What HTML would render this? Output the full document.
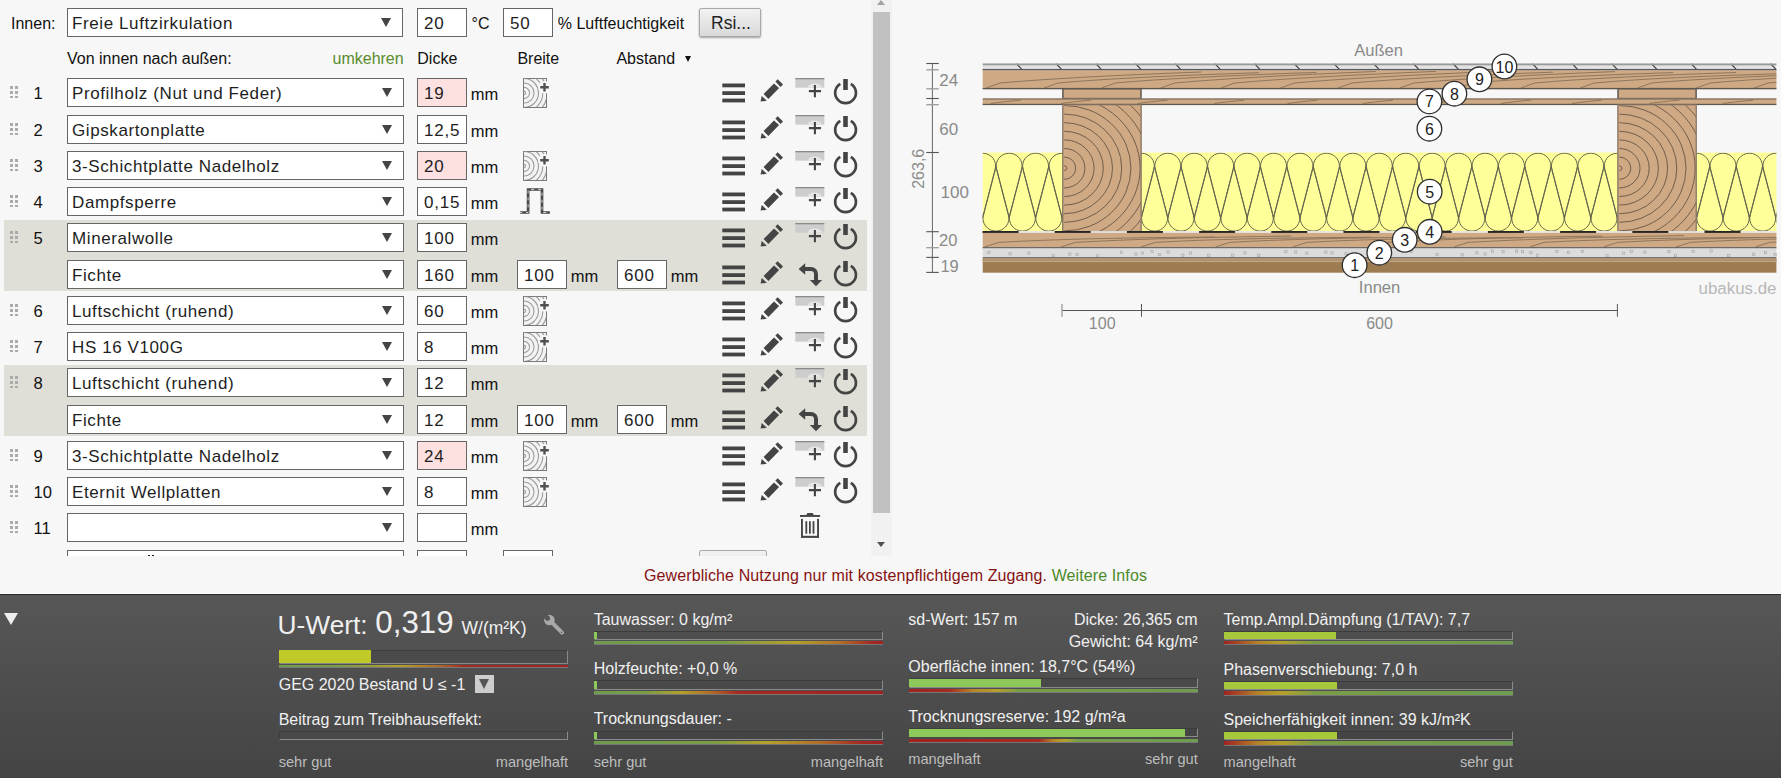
<!DOCTYPE html>
<html><head><meta charset="utf-8"><style>
*{box-sizing:border-box;margin:0;padding:0}
html,body{width:1781px;height:778px;overflow:hidden;background:#f7f7f7;font-family:"Liberation Sans",sans-serif;font-size:16px;color:#111}
.abs,.sel,.inp,.t,.mm,.num,.drag,.ic,.grey,.btn{position:absolute}
#left{position:absolute;left:0;top:0;width:871px;height:555.7px;overflow:hidden}
.grey{left:4px;width:863px;background:#dfded7}
.sel{height:29px;background:#fff;border:1px solid #666}
.sel .st{position:absolute;left:4px;font-size:17px;line-height:20px;letter-spacing:0.6px;white-space:nowrap;color:#1e1e1e}
.sel .arr{position:absolute;right:11px;top:9.3px;width:0;height:0;border-left:5.5px solid transparent;border-right:5.5px solid transparent;border-top:9.5px solid #444}
.inp{height:29px;background:#fff;border:1px solid #666}
.inp.pink{background:#fde0e0}
.inp span{position:absolute;left:6px;font-size:17px;line-height:20px;letter-spacing:0.8px;color:#1e1e1e}
.mm,.t,.num{white-space:nowrap;color:#111}
.drag{left:10px;width:8px;height:13px}
.drag i{position:absolute;width:2.5px;height:2.5px;background:#aaa}
.drag i:nth-child(1){left:0;top:0}.drag i:nth-child(2){left:5px;top:0}
.drag i:nth-child(3){left:0;top:4.8px}.drag i:nth-child(4){left:5px;top:4.8px}
.drag i:nth-child(5){left:0;top:9.6px}.drag i:nth-child(6){left:5px;top:9.6px}
.ic{overflow:visible}
.btn{left:699px;top:8.2px;width:62px;height:29.3px;border:1px solid #a8a8a8;border-radius:2px;background:linear-gradient(#f2f2f2,#d9d9d9);box-shadow:0 1px 2px rgba(0,0,0,.35)}
#panel{position:absolute;left:0;top:592.5px;width:1781px;height:186px;border-top:1.2px solid #fff}
#panel .in{position:absolute;left:0;top:0;right:0;bottom:0;border-top:1.4px solid #2a2a2a;background:linear-gradient(#575757,#444)}
.w{position:absolute;color:#f0f0f0;white-space:nowrap}
.g{position:absolute;color:#bdbdbd;white-space:nowrap}
</style></head><body>
<div id="left">
<div class="grey" style="top:220.0px;height:70.5px"></div>
<div class="grey" style="top:365.0px;height:70.5px"></div>
<div class="drag" style="top:86.4px"><i></i><i></i><i></i><i></i><i></i><i></i></div>
<div class="num" style="left:33.6px;top:83.75px;font-size:16.6px;line-height:19px">1</div>
<div class="sel" style="left:67px;top:78.0px;width:337px"><span class="st" style="top:5.11px">Profilholz (Nut und Feder)</span><span class="arr"></span></div>
<div class="inp pink" style="left:417px;top:78.0px;width:50px"><span style="top:5.11px">19</span></div>
<div class="mm" style="left:470.8px;top:84.78px;font-size:16.5px;line-height:19px">mm</div>
<svg class="ic" style="left:522.6px;top:77.6px" width="30" height="31" viewBox="0 0 30 31"><defs><clipPath id="wc0"><rect x="1" y="0.5" width="22" height="28.5"/></clipPath></defs><rect x="0.5" y="0.5" width="23" height="29" fill="#f3f3f3" stroke="#7a7a7a" stroke-width="1"/><g clip-path="url(#wc0)" fill="none" stroke="#9c9c9c" stroke-width="1.1"><circle cx="1" cy="15" r="1.6"/><circle cx="1" cy="15" r="5.6"/><circle cx="1" cy="15" r="10"/><circle cx="1" cy="15" r="14.5"/><circle cx="1" cy="15" r="18.8"/><circle cx="1" cy="15" r="23.2"/><circle cx="1" cy="15" r="27.6"/></g><circle cx="21.5" cy="9.3" r="6.3" fill="#f7f7f7"/><path d="M21.5 5 V13.6 M17.2 9.3 H25.8" stroke="#505050" stroke-width="2.4"/></svg>
<svg class="ic" style="left:722px;top:81.5px" width="24" height="21" viewBox="0 0 24 21"><rect x="0.3" y="1.5" width="22.7" height="3.8" fill="#444"/><rect x="0.3" y="9.2" width="22.7" height="3.8" fill="#444"/><rect x="0.3" y="16.6" width="22.7" height="3.8" fill="#444"/></svg>
<svg class="ic" style="left:760px;top:78.9px" width="24" height="24" viewBox="0 0 24 24"><path d="M0.6 22.6 L1.7 16.9 L6.8 21.7 Z" fill="#444"/><path d="M3.6 15.0 L14.0 4.4 L19.1 9.0 L8.4 20.1 Z" fill="#444"/><path d="M15.4 2.5 L17.7 0.3 L23.0 5.5 L20.5 8.1 Z" fill="#444"/></svg>
<svg class="ic" style="left:795px;top:78.0px" width="30" height="32" viewBox="0 0 30 32"><rect x="0.3" y="0" width="29" height="9.7" fill="#cdcdcd"/><rect x="0.3" y="0" width="29" height="1.3" fill="#8a8a8a"/><path d="M12.5 9.7 A7.5 5.5 0 0 1 27 9.7 Z" fill="#e6e6e6"/><path d="M19.9 6.9 V19.2 M13.9 13.1 H26" stroke="#444" stroke-width="2.1"/></svg>
<svg class="ic" style="left:833px;top:78.0px" width="26" height="28" viewBox="0 0 26 28"><path d="M7.3 5.8 A10.4 10.4 0 1 0 17.8 5.8" fill="none" stroke="#444" stroke-width="2.7"/><rect x="10.2" y="1" width="4.6" height="11" fill="#444"/></svg>
<div class="drag" style="top:123.4px"><i></i><i></i><i></i><i></i><i></i><i></i></div>
<div class="num" style="left:33.6px;top:120.75px;font-size:16.6px;line-height:19px">2</div>
<div class="sel" style="left:67px;top:115.0px;width:337px"><span class="st" style="top:5.11px">Gipskartonplatte</span><span class="arr"></span></div>
<div class="inp" style="left:417px;top:115.0px;width:50px"><span style="top:5.11px">12,5</span></div>
<div class="mm" style="left:470.8px;top:121.78px;font-size:16.5px;line-height:19px">mm</div>
<svg class="ic" style="left:722px;top:118.5px" width="24" height="21" viewBox="0 0 24 21"><rect x="0.3" y="1.5" width="22.7" height="3.8" fill="#444"/><rect x="0.3" y="9.2" width="22.7" height="3.8" fill="#444"/><rect x="0.3" y="16.6" width="22.7" height="3.8" fill="#444"/></svg>
<svg class="ic" style="left:760px;top:115.9px" width="24" height="24" viewBox="0 0 24 24"><path d="M0.6 22.6 L1.7 16.9 L6.8 21.7 Z" fill="#444"/><path d="M3.6 15.0 L14.0 4.4 L19.1 9.0 L8.4 20.1 Z" fill="#444"/><path d="M15.4 2.5 L17.7 0.3 L23.0 5.5 L20.5 8.1 Z" fill="#444"/></svg>
<svg class="ic" style="left:795px;top:115.0px" width="30" height="32" viewBox="0 0 30 32"><rect x="0.3" y="0" width="29" height="9.7" fill="#cdcdcd"/><rect x="0.3" y="0" width="29" height="1.3" fill="#8a8a8a"/><path d="M12.5 9.7 A7.5 5.5 0 0 1 27 9.7 Z" fill="#e6e6e6"/><path d="M19.9 6.9 V19.2 M13.9 13.1 H26" stroke="#444" stroke-width="2.1"/></svg>
<svg class="ic" style="left:833px;top:115.0px" width="26" height="28" viewBox="0 0 26 28"><path d="M7.3 5.8 A10.4 10.4 0 1 0 17.8 5.8" fill="none" stroke="#444" stroke-width="2.7"/><rect x="10.2" y="1" width="4.6" height="11" fill="#444"/></svg>
<div class="drag" style="top:159.4px"><i></i><i></i><i></i><i></i><i></i><i></i></div>
<div class="num" style="left:33.6px;top:156.75px;font-size:16.6px;line-height:19px">3</div>
<div class="sel" style="left:67px;top:151.0px;width:337px"><span class="st" style="top:5.11px">3-Schichtplatte Nadelholz</span><span class="arr"></span></div>
<div class="inp pink" style="left:417px;top:151.0px;width:50px"><span style="top:5.11px">20</span></div>
<div class="mm" style="left:470.8px;top:157.78px;font-size:16.5px;line-height:19px">mm</div>
<svg class="ic" style="left:522.6px;top:150.6px" width="30" height="31" viewBox="0 0 30 31"><defs><clipPath id="wc2"><rect x="1" y="0.5" width="22" height="28.5"/></clipPath></defs><rect x="0.5" y="0.5" width="23" height="29" fill="#f3f3f3" stroke="#7a7a7a" stroke-width="1"/><g clip-path="url(#wc2)" fill="none" stroke="#9c9c9c" stroke-width="1.1"><circle cx="1" cy="15" r="1.6"/><circle cx="1" cy="15" r="5.6"/><circle cx="1" cy="15" r="10"/><circle cx="1" cy="15" r="14.5"/><circle cx="1" cy="15" r="18.8"/><circle cx="1" cy="15" r="23.2"/><circle cx="1" cy="15" r="27.6"/></g><circle cx="21.5" cy="9.3" r="6.3" fill="#f7f7f7"/><path d="M21.5 5 V13.6 M17.2 9.3 H25.8" stroke="#505050" stroke-width="2.4"/></svg>
<svg class="ic" style="left:722px;top:154.5px" width="24" height="21" viewBox="0 0 24 21"><rect x="0.3" y="1.5" width="22.7" height="3.8" fill="#444"/><rect x="0.3" y="9.2" width="22.7" height="3.8" fill="#444"/><rect x="0.3" y="16.6" width="22.7" height="3.8" fill="#444"/></svg>
<svg class="ic" style="left:760px;top:151.9px" width="24" height="24" viewBox="0 0 24 24"><path d="M0.6 22.6 L1.7 16.9 L6.8 21.7 Z" fill="#444"/><path d="M3.6 15.0 L14.0 4.4 L19.1 9.0 L8.4 20.1 Z" fill="#444"/><path d="M15.4 2.5 L17.7 0.3 L23.0 5.5 L20.5 8.1 Z" fill="#444"/></svg>
<svg class="ic" style="left:795px;top:151.0px" width="30" height="32" viewBox="0 0 30 32"><rect x="0.3" y="0" width="29" height="9.7" fill="#cdcdcd"/><rect x="0.3" y="0" width="29" height="1.3" fill="#8a8a8a"/><path d="M12.5 9.7 A7.5 5.5 0 0 1 27 9.7 Z" fill="#e6e6e6"/><path d="M19.9 6.9 V19.2 M13.9 13.1 H26" stroke="#444" stroke-width="2.1"/></svg>
<svg class="ic" style="left:833px;top:151.0px" width="26" height="28" viewBox="0 0 26 28"><path d="M7.3 5.8 A10.4 10.4 0 1 0 17.8 5.8" fill="none" stroke="#444" stroke-width="2.7"/><rect x="10.2" y="1" width="4.6" height="11" fill="#444"/></svg>
<div class="drag" style="top:195.4px"><i></i><i></i><i></i><i></i><i></i><i></i></div>
<div class="num" style="left:33.6px;top:192.75px;font-size:16.6px;line-height:19px">4</div>
<div class="sel" style="left:67px;top:187.0px;width:337px"><span class="st" style="top:5.11px">Dampfsperre</span><span class="arr"></span></div>
<div class="inp" style="left:417px;top:187.0px;width:50px"><span style="top:5.11px">0,15</span></div>
<div class="mm" style="left:470.8px;top:193.78px;font-size:16.5px;line-height:19px">mm</div>
<svg class="ic" style="left:520px;top:187.0px" width="32" height="30" viewBox="0 0 32 30"><path d="M0.2 25.5 H8.1 V2.5 H22 V25.5 H29.9" fill="none" stroke="#484848" stroke-width="2.7"/><path d="M0.2 25.5 H8.1 V2.5 H22 V25.5 H29.9" fill="none" stroke="#e0e0e0" stroke-width="0.9" stroke-dasharray="3 4" stroke-dashoffset="1"/></svg>
<svg class="ic" style="left:722px;top:190.5px" width="24" height="21" viewBox="0 0 24 21"><rect x="0.3" y="1.5" width="22.7" height="3.8" fill="#444"/><rect x="0.3" y="9.2" width="22.7" height="3.8" fill="#444"/><rect x="0.3" y="16.6" width="22.7" height="3.8" fill="#444"/></svg>
<svg class="ic" style="left:760px;top:187.9px" width="24" height="24" viewBox="0 0 24 24"><path d="M0.6 22.6 L1.7 16.9 L6.8 21.7 Z" fill="#444"/><path d="M3.6 15.0 L14.0 4.4 L19.1 9.0 L8.4 20.1 Z" fill="#444"/><path d="M15.4 2.5 L17.7 0.3 L23.0 5.5 L20.5 8.1 Z" fill="#444"/></svg>
<svg class="ic" style="left:795px;top:187.0px" width="30" height="32" viewBox="0 0 30 32"><rect x="0.3" y="0" width="29" height="9.7" fill="#cdcdcd"/><rect x="0.3" y="0" width="29" height="1.3" fill="#8a8a8a"/><path d="M12.5 9.7 A7.5 5.5 0 0 1 27 9.7 Z" fill="#e6e6e6"/><path d="M19.9 6.9 V19.2 M13.9 13.1 H26" stroke="#444" stroke-width="2.1"/></svg>
<svg class="ic" style="left:833px;top:187.0px" width="26" height="28" viewBox="0 0 26 28"><path d="M7.3 5.8 A10.4 10.4 0 1 0 17.8 5.8" fill="none" stroke="#444" stroke-width="2.7"/><rect x="10.2" y="1" width="4.6" height="11" fill="#444"/></svg>
<div class="drag" style="top:231.4px"><i></i><i></i><i></i><i></i><i></i><i></i></div>
<div class="num" style="left:33.6px;top:228.75px;font-size:16.6px;line-height:19px">5</div>
<div class="sel" style="left:67px;top:223.0px;width:337px"><span class="st" style="top:5.11px">Mineralwolle</span><span class="arr"></span></div>
<div class="inp" style="left:417px;top:223.0px;width:50px"><span style="top:5.11px">100</span></div>
<div class="mm" style="left:470.8px;top:229.78px;font-size:16.5px;line-height:19px">mm</div>
<svg class="ic" style="left:722px;top:226.5px" width="24" height="21" viewBox="0 0 24 21"><rect x="0.3" y="1.5" width="22.7" height="3.8" fill="#444"/><rect x="0.3" y="9.2" width="22.7" height="3.8" fill="#444"/><rect x="0.3" y="16.6" width="22.7" height="3.8" fill="#444"/></svg>
<svg class="ic" style="left:760px;top:223.9px" width="24" height="24" viewBox="0 0 24 24"><path d="M0.6 22.6 L1.7 16.9 L6.8 21.7 Z" fill="#444"/><path d="M3.6 15.0 L14.0 4.4 L19.1 9.0 L8.4 20.1 Z" fill="#444"/><path d="M15.4 2.5 L17.7 0.3 L23.0 5.5 L20.5 8.1 Z" fill="#444"/></svg>
<svg class="ic" style="left:795px;top:223.0px" width="30" height="32" viewBox="0 0 30 32"><rect x="0.3" y="0" width="29" height="9.7" fill="#cdcdcd"/><rect x="0.3" y="0" width="29" height="1.3" fill="#8a8a8a"/><path d="M12.5 9.7 A7.5 5.5 0 0 1 27 9.7 Z" fill="#e6e6e6"/><path d="M19.9 6.9 V19.2 M13.9 13.1 H26" stroke="#444" stroke-width="2.1"/></svg>
<svg class="ic" style="left:833px;top:223.0px" width="26" height="28" viewBox="0 0 26 28"><path d="M7.3 5.8 A10.4 10.4 0 1 0 17.8 5.8" fill="none" stroke="#444" stroke-width="2.7"/><rect x="10.2" y="1" width="4.6" height="11" fill="#444"/></svg>
<div class="sel" style="left:67px;top:260.0px;width:337px"><span class="st" style="top:5.11px">Fichte</span><span class="arr"></span></div>
<div class="inp" style="left:417px;top:260.0px;width:50px"><span style="top:5.11px">160</span></div>
<div class="mm" style="left:470.8px;top:266.78px;font-size:16.5px;line-height:19px">mm</div>
<div class="inp" style="left:517px;top:260.0px;width:50px"><span style="top:5.11px">100</span></div>
<div class="mm" style="left:570.8px;top:266.78px;font-size:16.5px;line-height:19px">mm</div>
<div class="inp" style="left:617px;top:260.0px;width:50px"><span style="top:5.11px">600</span></div>
<div class="mm" style="left:670.8px;top:266.78px;font-size:16.5px;line-height:19px">mm</div>
<svg class="ic" style="left:722px;top:263.5px" width="24" height="21" viewBox="0 0 24 21"><rect x="0.3" y="1.5" width="22.7" height="3.8" fill="#444"/><rect x="0.3" y="9.2" width="22.7" height="3.8" fill="#444"/><rect x="0.3" y="16.6" width="22.7" height="3.8" fill="#444"/></svg>
<svg class="ic" style="left:760px;top:260.9px" width="24" height="24" viewBox="0 0 24 24"><path d="M0.6 22.6 L1.7 16.9 L6.8 21.7 Z" fill="#444"/><path d="M3.6 15.0 L14.0 4.4 L19.1 9.0 L8.4 20.1 Z" fill="#444"/><path d="M15.4 2.5 L17.7 0.3 L23.0 5.5 L20.5 8.1 Z" fill="#444"/></svg>
<svg class="ic" style="left:798px;top:260.0px" width="26" height="28" viewBox="0 0 26 28"><path d="M0.6 9 L7.2 3.2 V7 H13 A7 7 0 0 1 20 14 V19.9 H24.1 L18 26.3 L11.9 19.9 H16 V14 A3 3 0 0 0 13 11 H7.2 V14.8 Z" fill="#444"/></svg>
<svg class="ic" style="left:833px;top:260.0px" width="26" height="28" viewBox="0 0 26 28"><path d="M7.3 5.8 A10.4 10.4 0 1 0 17.8 5.8" fill="none" stroke="#444" stroke-width="2.7"/><rect x="10.2" y="1" width="4.6" height="11" fill="#444"/></svg>
<div class="drag" style="top:304.4px"><i></i><i></i><i></i><i></i><i></i><i></i></div>
<div class="num" style="left:33.6px;top:301.75px;font-size:16.6px;line-height:19px">6</div>
<div class="sel" style="left:67px;top:296.0px;width:337px"><span class="st" style="top:5.11px">Luftschicht (ruhend)</span><span class="arr"></span></div>
<div class="inp" style="left:417px;top:296.0px;width:50px"><span style="top:5.11px">60</span></div>
<div class="mm" style="left:470.8px;top:302.78px;font-size:16.5px;line-height:19px">mm</div>
<svg class="ic" style="left:522.6px;top:295.6px" width="30" height="31" viewBox="0 0 30 31"><defs><clipPath id="wc6"><rect x="1" y="0.5" width="22" height="28.5"/></clipPath></defs><rect x="0.5" y="0.5" width="23" height="29" fill="#f3f3f3" stroke="#7a7a7a" stroke-width="1"/><g clip-path="url(#wc6)" fill="none" stroke="#9c9c9c" stroke-width="1.1"><circle cx="1" cy="15" r="1.6"/><circle cx="1" cy="15" r="5.6"/><circle cx="1" cy="15" r="10"/><circle cx="1" cy="15" r="14.5"/><circle cx="1" cy="15" r="18.8"/><circle cx="1" cy="15" r="23.2"/><circle cx="1" cy="15" r="27.6"/></g><circle cx="21.5" cy="9.3" r="6.3" fill="#f7f7f7"/><path d="M21.5 5 V13.6 M17.2 9.3 H25.8" stroke="#505050" stroke-width="2.4"/></svg>
<svg class="ic" style="left:722px;top:299.5px" width="24" height="21" viewBox="0 0 24 21"><rect x="0.3" y="1.5" width="22.7" height="3.8" fill="#444"/><rect x="0.3" y="9.2" width="22.7" height="3.8" fill="#444"/><rect x="0.3" y="16.6" width="22.7" height="3.8" fill="#444"/></svg>
<svg class="ic" style="left:760px;top:296.9px" width="24" height="24" viewBox="0 0 24 24"><path d="M0.6 22.6 L1.7 16.9 L6.8 21.7 Z" fill="#444"/><path d="M3.6 15.0 L14.0 4.4 L19.1 9.0 L8.4 20.1 Z" fill="#444"/><path d="M15.4 2.5 L17.7 0.3 L23.0 5.5 L20.5 8.1 Z" fill="#444"/></svg>
<svg class="ic" style="left:795px;top:296.0px" width="30" height="32" viewBox="0 0 30 32"><rect x="0.3" y="0" width="29" height="9.7" fill="#cdcdcd"/><rect x="0.3" y="0" width="29" height="1.3" fill="#8a8a8a"/><path d="M12.5 9.7 A7.5 5.5 0 0 1 27 9.7 Z" fill="#e6e6e6"/><path d="M19.9 6.9 V19.2 M13.9 13.1 H26" stroke="#444" stroke-width="2.1"/></svg>
<svg class="ic" style="left:833px;top:296.0px" width="26" height="28" viewBox="0 0 26 28"><path d="M7.3 5.8 A10.4 10.4 0 1 0 17.8 5.8" fill="none" stroke="#444" stroke-width="2.7"/><rect x="10.2" y="1" width="4.6" height="11" fill="#444"/></svg>
<div class="drag" style="top:340.4px"><i></i><i></i><i></i><i></i><i></i><i></i></div>
<div class="num" style="left:33.6px;top:337.75px;font-size:16.6px;line-height:19px">7</div>
<div class="sel" style="left:67px;top:332.0px;width:337px"><span class="st" style="top:5.11px">HS 16 V100G</span><span class="arr"></span></div>
<div class="inp" style="left:417px;top:332.0px;width:50px"><span style="top:5.11px">8</span></div>
<div class="mm" style="left:470.8px;top:338.78px;font-size:16.5px;line-height:19px">mm</div>
<svg class="ic" style="left:522.6px;top:331.6px" width="30" height="31" viewBox="0 0 30 31"><defs><clipPath id="wc7"><rect x="1" y="0.5" width="22" height="28.5"/></clipPath></defs><rect x="0.5" y="0.5" width="23" height="29" fill="#f3f3f3" stroke="#7a7a7a" stroke-width="1"/><g clip-path="url(#wc7)" fill="none" stroke="#9c9c9c" stroke-width="1.1"><circle cx="1" cy="15" r="1.6"/><circle cx="1" cy="15" r="5.6"/><circle cx="1" cy="15" r="10"/><circle cx="1" cy="15" r="14.5"/><circle cx="1" cy="15" r="18.8"/><circle cx="1" cy="15" r="23.2"/><circle cx="1" cy="15" r="27.6"/></g><circle cx="21.5" cy="9.3" r="6.3" fill="#f7f7f7"/><path d="M21.5 5 V13.6 M17.2 9.3 H25.8" stroke="#505050" stroke-width="2.4"/></svg>
<svg class="ic" style="left:722px;top:335.5px" width="24" height="21" viewBox="0 0 24 21"><rect x="0.3" y="1.5" width="22.7" height="3.8" fill="#444"/><rect x="0.3" y="9.2" width="22.7" height="3.8" fill="#444"/><rect x="0.3" y="16.6" width="22.7" height="3.8" fill="#444"/></svg>
<svg class="ic" style="left:760px;top:332.9px" width="24" height="24" viewBox="0 0 24 24"><path d="M0.6 22.6 L1.7 16.9 L6.8 21.7 Z" fill="#444"/><path d="M3.6 15.0 L14.0 4.4 L19.1 9.0 L8.4 20.1 Z" fill="#444"/><path d="M15.4 2.5 L17.7 0.3 L23.0 5.5 L20.5 8.1 Z" fill="#444"/></svg>
<svg class="ic" style="left:795px;top:332.0px" width="30" height="32" viewBox="0 0 30 32"><rect x="0.3" y="0" width="29" height="9.7" fill="#cdcdcd"/><rect x="0.3" y="0" width="29" height="1.3" fill="#8a8a8a"/><path d="M12.5 9.7 A7.5 5.5 0 0 1 27 9.7 Z" fill="#e6e6e6"/><path d="M19.9 6.9 V19.2 M13.9 13.1 H26" stroke="#444" stroke-width="2.1"/></svg>
<svg class="ic" style="left:833px;top:332.0px" width="26" height="28" viewBox="0 0 26 28"><path d="M7.3 5.8 A10.4 10.4 0 1 0 17.8 5.8" fill="none" stroke="#444" stroke-width="2.7"/><rect x="10.2" y="1" width="4.6" height="11" fill="#444"/></svg>
<div class="drag" style="top:376.4px"><i></i><i></i><i></i><i></i><i></i><i></i></div>
<div class="num" style="left:33.6px;top:373.75px;font-size:16.6px;line-height:19px">8</div>
<div class="sel" style="left:67px;top:368.0px;width:337px"><span class="st" style="top:5.11px">Luftschicht (ruhend)</span><span class="arr"></span></div>
<div class="inp" style="left:417px;top:368.0px;width:50px"><span style="top:5.11px">12</span></div>
<div class="mm" style="left:470.8px;top:374.78px;font-size:16.5px;line-height:19px">mm</div>
<svg class="ic" style="left:722px;top:371.5px" width="24" height="21" viewBox="0 0 24 21"><rect x="0.3" y="1.5" width="22.7" height="3.8" fill="#444"/><rect x="0.3" y="9.2" width="22.7" height="3.8" fill="#444"/><rect x="0.3" y="16.6" width="22.7" height="3.8" fill="#444"/></svg>
<svg class="ic" style="left:760px;top:368.9px" width="24" height="24" viewBox="0 0 24 24"><path d="M0.6 22.6 L1.7 16.9 L6.8 21.7 Z" fill="#444"/><path d="M3.6 15.0 L14.0 4.4 L19.1 9.0 L8.4 20.1 Z" fill="#444"/><path d="M15.4 2.5 L17.7 0.3 L23.0 5.5 L20.5 8.1 Z" fill="#444"/></svg>
<svg class="ic" style="left:795px;top:368.0px" width="30" height="32" viewBox="0 0 30 32"><rect x="0.3" y="0" width="29" height="9.7" fill="#cdcdcd"/><rect x="0.3" y="0" width="29" height="1.3" fill="#8a8a8a"/><path d="M12.5 9.7 A7.5 5.5 0 0 1 27 9.7 Z" fill="#e6e6e6"/><path d="M19.9 6.9 V19.2 M13.9 13.1 H26" stroke="#444" stroke-width="2.1"/></svg>
<svg class="ic" style="left:833px;top:368.0px" width="26" height="28" viewBox="0 0 26 28"><path d="M7.3 5.8 A10.4 10.4 0 1 0 17.8 5.8" fill="none" stroke="#444" stroke-width="2.7"/><rect x="10.2" y="1" width="4.6" height="11" fill="#444"/></svg>
<div class="sel" style="left:67px;top:405.0px;width:337px"><span class="st" style="top:5.11px">Fichte</span><span class="arr"></span></div>
<div class="inp" style="left:417px;top:405.0px;width:50px"><span style="top:5.11px">12</span></div>
<div class="mm" style="left:470.8px;top:411.78px;font-size:16.5px;line-height:19px">mm</div>
<div class="inp" style="left:517px;top:405.0px;width:50px"><span style="top:5.11px">100</span></div>
<div class="mm" style="left:570.8px;top:411.78px;font-size:16.5px;line-height:19px">mm</div>
<div class="inp" style="left:617px;top:405.0px;width:50px"><span style="top:5.11px">600</span></div>
<div class="mm" style="left:670.8px;top:411.78px;font-size:16.5px;line-height:19px">mm</div>
<svg class="ic" style="left:722px;top:408.5px" width="24" height="21" viewBox="0 0 24 21"><rect x="0.3" y="1.5" width="22.7" height="3.8" fill="#444"/><rect x="0.3" y="9.2" width="22.7" height="3.8" fill="#444"/><rect x="0.3" y="16.6" width="22.7" height="3.8" fill="#444"/></svg>
<svg class="ic" style="left:760px;top:405.9px" width="24" height="24" viewBox="0 0 24 24"><path d="M0.6 22.6 L1.7 16.9 L6.8 21.7 Z" fill="#444"/><path d="M3.6 15.0 L14.0 4.4 L19.1 9.0 L8.4 20.1 Z" fill="#444"/><path d="M15.4 2.5 L17.7 0.3 L23.0 5.5 L20.5 8.1 Z" fill="#444"/></svg>
<svg class="ic" style="left:798px;top:405.0px" width="26" height="28" viewBox="0 0 26 28"><path d="M0.6 9 L7.2 3.2 V7 H13 A7 7 0 0 1 20 14 V19.9 H24.1 L18 26.3 L11.9 19.9 H16 V14 A3 3 0 0 0 13 11 H7.2 V14.8 Z" fill="#444"/></svg>
<svg class="ic" style="left:833px;top:405.0px" width="26" height="28" viewBox="0 0 26 28"><path d="M7.3 5.8 A10.4 10.4 0 1 0 17.8 5.8" fill="none" stroke="#444" stroke-width="2.7"/><rect x="10.2" y="1" width="4.6" height="11" fill="#444"/></svg>
<div class="drag" style="top:449.4px"><i></i><i></i><i></i><i></i><i></i><i></i></div>
<div class="num" style="left:33.6px;top:446.75px;font-size:16.6px;line-height:19px">9</div>
<div class="sel" style="left:67px;top:441.0px;width:337px"><span class="st" style="top:5.11px">3-Schichtplatte Nadelholz</span><span class="arr"></span></div>
<div class="inp pink" style="left:417px;top:441.0px;width:50px"><span style="top:5.11px">24</span></div>
<div class="mm" style="left:470.8px;top:447.78px;font-size:16.5px;line-height:19px">mm</div>
<svg class="ic" style="left:522.6px;top:440.6px" width="30" height="31" viewBox="0 0 30 31"><defs><clipPath id="wc10"><rect x="1" y="0.5" width="22" height="28.5"/></clipPath></defs><rect x="0.5" y="0.5" width="23" height="29" fill="#f3f3f3" stroke="#7a7a7a" stroke-width="1"/><g clip-path="url(#wc10)" fill="none" stroke="#9c9c9c" stroke-width="1.1"><circle cx="1" cy="15" r="1.6"/><circle cx="1" cy="15" r="5.6"/><circle cx="1" cy="15" r="10"/><circle cx="1" cy="15" r="14.5"/><circle cx="1" cy="15" r="18.8"/><circle cx="1" cy="15" r="23.2"/><circle cx="1" cy="15" r="27.6"/></g><circle cx="21.5" cy="9.3" r="6.3" fill="#f7f7f7"/><path d="M21.5 5 V13.6 M17.2 9.3 H25.8" stroke="#505050" stroke-width="2.4"/></svg>
<svg class="ic" style="left:722px;top:444.5px" width="24" height="21" viewBox="0 0 24 21"><rect x="0.3" y="1.5" width="22.7" height="3.8" fill="#444"/><rect x="0.3" y="9.2" width="22.7" height="3.8" fill="#444"/><rect x="0.3" y="16.6" width="22.7" height="3.8" fill="#444"/></svg>
<svg class="ic" style="left:760px;top:441.9px" width="24" height="24" viewBox="0 0 24 24"><path d="M0.6 22.6 L1.7 16.9 L6.8 21.7 Z" fill="#444"/><path d="M3.6 15.0 L14.0 4.4 L19.1 9.0 L8.4 20.1 Z" fill="#444"/><path d="M15.4 2.5 L17.7 0.3 L23.0 5.5 L20.5 8.1 Z" fill="#444"/></svg>
<svg class="ic" style="left:795px;top:441.0px" width="30" height="32" viewBox="0 0 30 32"><rect x="0.3" y="0" width="29" height="9.7" fill="#cdcdcd"/><rect x="0.3" y="0" width="29" height="1.3" fill="#8a8a8a"/><path d="M12.5 9.7 A7.5 5.5 0 0 1 27 9.7 Z" fill="#e6e6e6"/><path d="M19.9 6.9 V19.2 M13.9 13.1 H26" stroke="#444" stroke-width="2.1"/></svg>
<svg class="ic" style="left:833px;top:441.0px" width="26" height="28" viewBox="0 0 26 28"><path d="M7.3 5.8 A10.4 10.4 0 1 0 17.8 5.8" fill="none" stroke="#444" stroke-width="2.7"/><rect x="10.2" y="1" width="4.6" height="11" fill="#444"/></svg>
<div class="drag" style="top:485.4px"><i></i><i></i><i></i><i></i><i></i><i></i></div>
<div class="num" style="left:33.6px;top:482.75px;font-size:16.6px;line-height:19px">10</div>
<div class="sel" style="left:67px;top:477.0px;width:337px"><span class="st" style="top:5.11px">Eternit Wellplatten</span><span class="arr"></span></div>
<div class="inp" style="left:417px;top:477.0px;width:50px"><span style="top:5.11px">8</span></div>
<div class="mm" style="left:470.8px;top:483.78px;font-size:16.5px;line-height:19px">mm</div>
<svg class="ic" style="left:522.6px;top:476.6px" width="30" height="31" viewBox="0 0 30 31"><defs><clipPath id="wc11"><rect x="1" y="0.5" width="22" height="28.5"/></clipPath></defs><rect x="0.5" y="0.5" width="23" height="29" fill="#f3f3f3" stroke="#7a7a7a" stroke-width="1"/><g clip-path="url(#wc11)" fill="none" stroke="#9c9c9c" stroke-width="1.1"><circle cx="1" cy="15" r="1.6"/><circle cx="1" cy="15" r="5.6"/><circle cx="1" cy="15" r="10"/><circle cx="1" cy="15" r="14.5"/><circle cx="1" cy="15" r="18.8"/><circle cx="1" cy="15" r="23.2"/><circle cx="1" cy="15" r="27.6"/></g><circle cx="21.5" cy="9.3" r="6.3" fill="#f7f7f7"/><path d="M21.5 5 V13.6 M17.2 9.3 H25.8" stroke="#505050" stroke-width="2.4"/></svg>
<svg class="ic" style="left:722px;top:480.5px" width="24" height="21" viewBox="0 0 24 21"><rect x="0.3" y="1.5" width="22.7" height="3.8" fill="#444"/><rect x="0.3" y="9.2" width="22.7" height="3.8" fill="#444"/><rect x="0.3" y="16.6" width="22.7" height="3.8" fill="#444"/></svg>
<svg class="ic" style="left:760px;top:477.9px" width="24" height="24" viewBox="0 0 24 24"><path d="M0.6 22.6 L1.7 16.9 L6.8 21.7 Z" fill="#444"/><path d="M3.6 15.0 L14.0 4.4 L19.1 9.0 L8.4 20.1 Z" fill="#444"/><path d="M15.4 2.5 L17.7 0.3 L23.0 5.5 L20.5 8.1 Z" fill="#444"/></svg>
<svg class="ic" style="left:795px;top:477.0px" width="30" height="32" viewBox="0 0 30 32"><rect x="0.3" y="0" width="29" height="9.7" fill="#cdcdcd"/><rect x="0.3" y="0" width="29" height="1.3" fill="#8a8a8a"/><path d="M12.5 9.7 A7.5 5.5 0 0 1 27 9.7 Z" fill="#e6e6e6"/><path d="M19.9 6.9 V19.2 M13.9 13.1 H26" stroke="#444" stroke-width="2.1"/></svg>
<svg class="ic" style="left:833px;top:477.0px" width="26" height="28" viewBox="0 0 26 28"><path d="M7.3 5.8 A10.4 10.4 0 1 0 17.8 5.8" fill="none" stroke="#444" stroke-width="2.7"/><rect x="10.2" y="1" width="4.6" height="11" fill="#444"/></svg>
<div class="drag" style="top:521.4px"><i></i><i></i><i></i><i></i><i></i><i></i></div>
<div class="num" style="left:33.6px;top:518.75px;font-size:16.6px;line-height:19px">11</div>
<div class="sel" style="left:67px;top:513.0px;width:337px"><span class="st" style="top:5.11px"></span><span class="arr"></span></div>
<div class="inp" style="left:417px;top:513.0px;width:50px"><span style="top:5.11px"></span></div>
<div class="mm" style="left:470.8px;top:519.78px;font-size:16.5px;line-height:19px">mm</div>
<svg class="ic" style="left:790px;top:505.0px" width="40" height="40" viewBox="0 0 40 40"><g fill="#444"><rect x="10" y="10" width="20.1" height="1.9"/><path d="M16.2 10.2 L17.4 8 H22.7 L23.9 10.2 Z"/><rect x="11" y="13.9" width="1.9" height="19"/><rect x="27.1" y="13.9" width="1.9" height="19"/><rect x="11" y="30.8" width="18" height="2.1"/><rect x="15.4" y="15.9" width="1.8" height="12.9" rx="0.9"/><rect x="19" y="15.9" width="1.8" height="12.9" rx="0.9"/><rect x="22.6" y="15.9" width="1.8" height="12.9" rx="0.9"/></g></svg>
<div class="sel" style="left:67px;top:550.0px;width:337px"><span class="st" style="top:5.11px"></span></div>
<div class="abs" style="left:148px;top:555.0px;width:2px;height:2px;background:#223"></div>
<div class="abs" style="left:152px;top:555.0px;width:2px;height:2px;background:#223"></div>
<div class="inp" style="left:417px;top:550.0px;width:50px"><span style="top:5.11px"></span></div>
<div class="inp" style="left:503px;top:550.0px;width:50px"><span style="top:5.11px"></span></div>
<div class="abs" style="left:699px;top:550.0px;width:68px;height:29px;border:1px solid #a8a8a8;border-radius:2px;background:linear-gradient(#f2f2f2,#d9d9d9)"></div>
</div>
<div class="t" style="left:11px;top:15.36px;font-size:16px;line-height:18px">Innen:</div>
<div class="sel" style="left:67px;top:8.0px;width:336px"><span class="st" style="top:5.11px">Freie Luftzirkulation</span><span class="arr"></span></div>
<div class="inp" style="left:417px;top:8.0px;width:50px"><span style="top:5.11px">20</span></div>
<div class="t" style="left:471.5px;top:15.36px;font-size:16px;line-height:18px">°C</div>
<div class="inp" style="left:503px;top:8.0px;width:50px"><span style="top:5.11px">50</span></div>
<div class="t" style="left:557.8px;top:15.36px;font-size:16px;line-height:18px">% Luftfeuchtigkeit</div>
<div class="btn"><span style="position:absolute;left:11px;top:3.5px;font-size:17.5px;line-height:20px;color:#222">Rsi...</span></div>
<div class="t" style="left:67px;top:50.06px;font-size:16px;line-height:18px">Von innen nach außen:</div>
<div class="t" style="left:332.5px;top:50.06px;font-size:16px;line-height:18px;color:#5a8b2d">umkehren</div>
<div class="t" style="left:417.3px;top:50.06px;font-size:16px;line-height:18px">Dicke</div>
<div class="t" style="left:517.4px;top:50.06px;font-size:16px;line-height:18px">Breite</div>
<div class="t" style="left:616.4px;top:50.06px;font-size:16px;line-height:18px">Abstand</div>
<div class="abs" style="left:685px;top:56px;width:0;height:0;border-left:3px solid transparent;border-right:3px solid transparent;border-top:6px solid #111"></div>
<div class="abs" style="left:871px;top:0;width:20.5px;height:555.7px;background:#f1f1f1"></div>
<div class="abs" style="left:873.2px;top:12px;width:16.8px;height:500.6px;background:#c1c1c1"></div>
<div class="abs" style="left:877px;top:0;width:0;height:0;border-left:4.8px solid transparent;border-right:4.8px solid transparent;border-bottom:5.2px solid #a3a3a3"></div>
<div class="abs" style="left:877px;top:541.6px;width:0;height:0;border-left:4.7px solid transparent;border-right:4.7px solid transparent;border-top:5.7px solid #505050"></div>
<div class="t" style="left:644px;top:566.96px;font-size:16px;line-height:18px;color:#861212;letter-spacing:0.105px">Gewerbliche Nutzung nur mit kostenpflichtigem Zugang. <span style="color:#4c8a2a">Weitere Infos</span></div>
<svg id="diag" class="abs" style="left:0;top:0" width="1781" height="340" viewBox="0 0 1781 340">
<defs>
<clipPath id="cE"><rect x="982.7" y="63.5" width="793.7" height="6.349999999999994"/></clipPath>
<clipPath id="c9"><rect x="982.7" y="69.85" width="793.7" height="18.950000000000003"/></clipPath>
<clipPath id="c7"><rect x="982.7" y="98.6" width="793.7" height="6.1000000000000085"/></clipPath>
<clipPath id="c5"><rect x="982.7" y="152.6" width="793.7" height="79.1"/></clipPath>
<clipPath id="c3"><rect x="982.7" y="231.7" width="793.7" height="16.0"/></clipPath>
<clipPath id="cb0"><rect x="1064.1" y="105.2" width="76.69999999999996" height="126.49999999999999"/></clipPath>
<clipPath id="cb1"><rect x="1619.2" y="105.2" width="76.69999999999996" height="126.49999999999999"/></clipPath>
</defs>
<rect x="982.7" y="63.5" width="793.7" height="6.349999999999994" fill="#e2e2e2"/>
<g clip-path="url(#cE)" stroke="#3c3c3c" stroke-width="1.1" fill="none">
<path d="M936.9 63.5 L942.9 69.85"/>
<path d="M976.6 63.5 L982.6 69.85"/>
<path d="M1016.3 63.5 L1022.3 69.85"/>
<path d="M1056.0 63.5 L1062.0 69.85"/>
<path d="M1095.7 63.5 L1101.7 69.85"/>
<path d="M1135.4 63.5 L1141.4 69.85"/>
<path d="M1175.1 63.5 L1181.1 69.85"/>
<path d="M1214.8 63.5 L1220.8 69.85"/>
<path d="M1254.4 63.5 L1260.4 69.85"/>
<path d="M1294.1 63.5 L1300.1 69.85"/>
<path d="M1333.8 63.5 L1339.8 69.85"/>
<path d="M1373.5 63.5 L1379.5 69.85"/>
<path d="M1413.2 63.5 L1419.2 69.85"/>
<path d="M1452.9 63.5 L1458.9 69.85"/>
<path d="M1492.6 63.5 L1498.6 69.85"/>
<path d="M1532.3 63.5 L1538.3 69.85"/>
<path d="M1572.0 63.5 L1578.0 69.85"/>
<path d="M1611.7 63.5 L1617.7 69.85"/>
<path d="M1651.3 63.5 L1657.3 69.85"/>
<path d="M1691.0 63.5 L1697.0 69.85"/>
<path d="M1730.7 63.5 L1736.7 69.85"/>
<path d="M1770.4 63.5 L1776.4 69.85"/>
</g>
<rect x="982.7" y="63.5" width="793.7" height="1.8" fill="#999"/>
<rect x="982.7" y="68.94999999999999" width="793.7" height="1.6" fill="#5a5a5a"/>
<rect x="982.7" y="70.55" width="793.7" height="18.250000000000004" fill="#cea983"/>
<g clip-path="url(#c9)" stroke="#86705a" stroke-width="0.9" fill="none">
<path d="M986.2 88.0 L1000.2 83.0 Q1066.2 77.0 1201.2 72.0"/>
<path d="M1044.1 88.0 L1058.1 83.0 Q1124.1 77.0 1259.1 72.7"/>
<path d="M1101.5 88.0 L1115.5 83.0 Q1181.5 77.0 1316.5 72.4"/>
<path d="M1160.7 88.0 L1174.7 83.0 Q1240.7 77.0 1375.7 71.5"/>
<path d="M1220.8 88.0 L1234.8 83.0 Q1300.8 77.0 1435.8 71.4"/>
<path d="M1280.4 88.0 L1294.4 83.0 Q1360.4 77.0 1495.4 71.5"/>
<path d="M1337.9 88.0 L1351.9 83.0 Q1417.9 77.0 1552.9 72.2"/>
<path d="M1399.9 88.0 L1413.9 83.0 Q1479.9 77.0 1614.9 71.6"/>
<path d="M1458.2 88.0 L1472.2 83.0 Q1538.2 77.0 1673.2 72.6"/>
<path d="M1520.9 88.0 L1534.9 83.0 Q1600.9 77.0 1735.9 72.5"/>
<path d="M1580.3 88.0 L1594.3 83.0 Q1660.3 77.0 1795.3 73.3"/>
<path d="M1637.6 88.0 L1651.6 83.0 Q1717.6 77.0 1852.6 73.1"/>
<path d="M1696.3 88.0 L1710.3 83.0 Q1776.3 77.0 1911.3 71.6"/>
<path d="M1754.0 88.0 L1768.0 83.0 Q1834.0 77.0 1969.0 72.0"/>
</g>
<rect x="982.7" y="87.89999999999999" width="793.7" height="1.4" fill="#5e564e"/>
<rect x="1062.8999999999999" y="88.8" width="78.09999999999995" height="9.799999999999997" fill="#cea983" stroke="#5f5850" stroke-width="1.5"/>
<rect x="1618.0" y="88.8" width="78.09999999999995" height="9.799999999999997" fill="#cea983" stroke="#5f5850" stroke-width="1.5"/>
<rect x="982.7" y="98.6" width="793.7" height="6.1000000000000085" fill="#cea983"/>
<g clip-path="url(#c7)" stroke="#8a7258" stroke-width="0.9" fill="none">
<path d="M990.7 103.5 Q1000.7 101.9 1020.7 100.2"/>
<path d="M1061.2 103.5 Q1071.2 101.9 1091.2 100.2"/>
<path d="M1137.4 103.5 Q1147.4 101.9 1167.4 100.2"/>
<path d="M1214.3 103.5 Q1224.3 101.9 1244.3 100.2"/>
<path d="M1287.5 103.5 Q1297.5 101.9 1317.5 100.2"/>
<path d="M1363.2 103.5 Q1373.2 101.9 1393.2 100.2"/>
<path d="M1432.1 103.5 Q1442.1 101.9 1462.1 100.2"/>
<path d="M1500.9 103.5 Q1510.9 101.9 1530.9 100.2"/>
<path d="M1571.8 103.5 Q1581.8 101.9 1601.8 100.2"/>
<path d="M1649.3 103.5 Q1659.3 101.9 1679.3 100.2"/>
<path d="M1723.3 103.5 Q1733.3 101.9 1753.3 100.2"/>
</g>
<rect x="982.7" y="98.39999999999999" width="793.7" height="1.2" fill="#7a6d60"/>
<rect x="982.7" y="103.8" width="793.7" height="1.3" fill="#5e564e"/>
<rect x="982.7" y="152.6" width="793.7" height="79.1" fill="#ffff99"/>
<g clip-path="url(#c5)"><path d="M956.26 218.08 L943.66 169.49 A13.02 13.02 0 1 1 968.86 169.49 Z M969.48 166.22 L956.88 214.81 A13.02 13.02 0 1 0 982.08 214.81 Z M982.70 218.08 L970.10 169.49 A13.02 13.02 0 1 1 995.30 169.49 Z M995.92 166.22 L983.32 214.81 A13.02 13.02 0 1 0 1008.52 214.81 Z M1009.14 218.08 L996.54 169.49 A13.02 13.02 0 1 1 1021.74 169.49 Z M1022.36 166.22 L1009.76 214.81 A13.02 13.02 0 1 0 1034.96 214.81 Z M1035.58 218.08 L1022.98 169.49 A13.02 13.02 0 1 1 1048.18 169.49 Z M1048.80 166.22 L1036.20 214.81 A13.02 13.02 0 1 0 1061.40 214.81 Z M1062.02 218.08 L1049.42 169.49 A13.02 13.02 0 1 1 1074.62 169.49 Z M1075.24 166.22 L1062.64 214.81 A13.02 13.02 0 1 0 1087.84 214.81 Z M1088.46 218.08 L1075.86 169.49 A13.02 13.02 0 1 1 1101.06 169.49 Z M1101.68 166.22 L1089.08 214.81 A13.02 13.02 0 1 0 1114.28 214.81 Z M1114.90 218.08 L1102.30 169.49 A13.02 13.02 0 1 1 1127.50 169.49 Z M1128.12 166.22 L1115.52 214.81 A13.02 13.02 0 1 0 1140.72 214.81 Z M1141.34 218.08 L1128.74 169.49 A13.02 13.02 0 1 1 1153.94 169.49 Z M1154.56 166.22 L1141.96 214.81 A13.02 13.02 0 1 0 1167.16 214.81 Z M1167.78 218.08 L1155.18 169.49 A13.02 13.02 0 1 1 1180.38 169.49 Z M1181.00 166.22 L1168.40 214.81 A13.02 13.02 0 1 0 1193.60 214.81 Z M1194.22 218.08 L1181.62 169.49 A13.02 13.02 0 1 1 1206.82 169.49 Z M1207.44 166.22 L1194.84 214.81 A13.02 13.02 0 1 0 1220.04 214.81 Z M1220.66 218.08 L1208.06 169.49 A13.02 13.02 0 1 1 1233.26 169.49 Z M1233.88 166.22 L1221.28 214.81 A13.02 13.02 0 1 0 1246.48 214.81 Z M1247.10 218.08 L1234.50 169.49 A13.02 13.02 0 1 1 1259.70 169.49 Z M1260.32 166.22 L1247.72 214.81 A13.02 13.02 0 1 0 1272.92 214.81 Z M1273.54 218.08 L1260.94 169.49 A13.02 13.02 0 1 1 1286.14 169.49 Z M1286.76 166.22 L1274.16 214.81 A13.02 13.02 0 1 0 1299.36 214.81 Z M1299.98 218.08 L1287.38 169.49 A13.02 13.02 0 1 1 1312.58 169.49 Z M1313.20 166.22 L1300.60 214.81 A13.02 13.02 0 1 0 1325.80 214.81 Z M1326.42 218.08 L1313.82 169.49 A13.02 13.02 0 1 1 1339.02 169.49 Z M1339.64 166.22 L1327.04 214.81 A13.02 13.02 0 1 0 1352.24 214.81 Z M1352.86 218.08 L1340.26 169.49 A13.02 13.02 0 1 1 1365.46 169.49 Z M1366.08 166.22 L1353.48 214.81 A13.02 13.02 0 1 0 1378.68 214.81 Z M1379.30 218.08 L1366.70 169.49 A13.02 13.02 0 1 1 1391.90 169.49 Z M1392.52 166.22 L1379.92 214.81 A13.02 13.02 0 1 0 1405.12 214.81 Z M1405.74 218.08 L1393.14 169.49 A13.02 13.02 0 1 1 1418.34 169.49 Z M1418.96 166.22 L1406.36 214.81 A13.02 13.02 0 1 0 1431.56 214.81 Z M1432.18 218.08 L1419.58 169.49 A13.02 13.02 0 1 1 1444.78 169.49 Z M1445.40 166.22 L1432.80 214.81 A13.02 13.02 0 1 0 1458.00 214.81 Z M1458.62 218.08 L1446.02 169.49 A13.02 13.02 0 1 1 1471.22 169.49 Z M1471.84 166.22 L1459.24 214.81 A13.02 13.02 0 1 0 1484.44 214.81 Z M1485.06 218.08 L1472.46 169.49 A13.02 13.02 0 1 1 1497.66 169.49 Z M1498.28 166.22 L1485.68 214.81 A13.02 13.02 0 1 0 1510.88 214.81 Z M1511.50 218.08 L1498.90 169.49 A13.02 13.02 0 1 1 1524.10 169.49 Z M1524.72 166.22 L1512.12 214.81 A13.02 13.02 0 1 0 1537.32 214.81 Z M1537.94 218.08 L1525.34 169.49 A13.02 13.02 0 1 1 1550.54 169.49 Z M1551.16 166.22 L1538.56 214.81 A13.02 13.02 0 1 0 1563.76 214.81 Z M1564.38 218.08 L1551.78 169.49 A13.02 13.02 0 1 1 1576.98 169.49 Z M1577.60 166.22 L1565.00 214.81 A13.02 13.02 0 1 0 1590.20 214.81 Z M1590.82 218.08 L1578.22 169.49 A13.02 13.02 0 1 1 1603.42 169.49 Z M1604.04 166.22 L1591.44 214.81 A13.02 13.02 0 1 0 1616.64 214.81 Z M1617.26 218.08 L1604.66 169.49 A13.02 13.02 0 1 1 1629.86 169.49 Z M1630.48 166.22 L1617.88 214.81 A13.02 13.02 0 1 0 1643.08 214.81 Z M1643.70 218.08 L1631.10 169.49 A13.02 13.02 0 1 1 1656.30 169.49 Z M1656.92 166.22 L1644.32 214.81 A13.02 13.02 0 1 0 1669.52 214.81 Z M1670.14 218.08 L1657.54 169.49 A13.02 13.02 0 1 1 1682.74 169.49 Z M1683.36 166.22 L1670.76 214.81 A13.02 13.02 0 1 0 1695.96 214.81 Z M1696.58 218.08 L1683.98 169.49 A13.02 13.02 0 1 1 1709.18 169.49 Z M1709.80 166.22 L1697.20 214.81 A13.02 13.02 0 1 0 1722.40 214.81 Z M1723.02 218.08 L1710.42 169.49 A13.02 13.02 0 1 1 1735.62 169.49 Z M1736.24 166.22 L1723.64 214.81 A13.02 13.02 0 1 0 1748.84 214.81 Z M1749.46 218.08 L1736.86 169.49 A13.02 13.02 0 1 1 1762.06 169.49 Z M1762.68 166.22 L1750.08 214.81 A13.02 13.02 0 1 0 1775.28 214.81 Z M1775.90 218.08 L1763.30 169.49 A13.02 13.02 0 1 1 1788.50 169.49 Z M1789.12 166.22 L1776.52 214.81 A13.02 13.02 0 1 0 1801.72 214.81 Z M1802.34 218.08 L1789.74 169.49 A13.02 13.02 0 1 1 1814.94 169.49 Z M1815.56 166.22 L1802.96 214.81 A13.02 13.02 0 1 0 1828.16 214.81 Z" fill="none" stroke="#66664e" stroke-width="1.0"/></g>
<rect x="1062.3" y="104.7" width="79.29999999999995" height="126.99999999999999" fill="#cea983"/>
<g clip-path="url(#cb0)" fill="none" stroke="#6c5a49" stroke-width="0.95"><circle cx="1064.5" cy="168.2" r="2.3"/><ellipse cx="1064.5" cy="168.2" rx="11.2" ry="11.1"/><ellipse cx="1064.5" cy="168.2" rx="20.4" ry="19.7"/><ellipse cx="1064.5" cy="168.2" rx="29.6" ry="28.3"/><ellipse cx="1064.5" cy="168.2" rx="38.8" ry="36.9"/><ellipse cx="1064.5" cy="168.2" rx="48.0" ry="45.5"/><ellipse cx="1064.5" cy="168.2" rx="57.2" ry="54.1"/><ellipse cx="1064.5" cy="168.2" rx="66.4" ry="62.7"/><ellipse cx="1064.5" cy="168.2" rx="75.6" ry="71.3"/><ellipse cx="1064.5" cy="168.2" rx="84.8" ry="79.9"/><ellipse cx="1064.5" cy="168.2" rx="94.0" ry="88.5"/><ellipse cx="1064.5" cy="168.2" rx="103.2" ry="97.1"/><ellipse cx="1064.5" cy="168.2" rx="112.4" ry="105.7"/></g>
<rect x="1062.8" y="104.7" width="78.29999999999995" height="126.99999999999999" fill="none" stroke="#7c6d60" stroke-width="1.1"/>
<rect x="1617.4" y="104.7" width="79.29999999999995" height="126.99999999999999" fill="#cea983"/>
<g clip-path="url(#cb1)" fill="none" stroke="#6c5a49" stroke-width="0.95"><circle cx="1619.6000000000001" cy="168.2" r="2.3"/><ellipse cx="1619.6000000000001" cy="168.2" rx="11.2" ry="11.1"/><ellipse cx="1619.6000000000001" cy="168.2" rx="20.4" ry="19.7"/><ellipse cx="1619.6000000000001" cy="168.2" rx="29.6" ry="28.3"/><ellipse cx="1619.6000000000001" cy="168.2" rx="38.8" ry="36.9"/><ellipse cx="1619.6000000000001" cy="168.2" rx="48.0" ry="45.5"/><ellipse cx="1619.6000000000001" cy="168.2" rx="57.2" ry="54.1"/><ellipse cx="1619.6000000000001" cy="168.2" rx="66.4" ry="62.7"/><ellipse cx="1619.6000000000001" cy="168.2" rx="75.6" ry="71.3"/><ellipse cx="1619.6000000000001" cy="168.2" rx="84.8" ry="79.9"/><ellipse cx="1619.6000000000001" cy="168.2" rx="94.0" ry="88.5"/><ellipse cx="1619.6000000000001" cy="168.2" rx="103.2" ry="97.1"/><ellipse cx="1619.6000000000001" cy="168.2" rx="112.4" ry="105.7"/></g>
<rect x="1617.9" y="104.7" width="78.29999999999995" height="126.99999999999999" fill="none" stroke="#7c6d60" stroke-width="1.1"/>
<rect x="982.7" y="231.1" width="793.7" height="1.8" fill="#e6e6e6"/>
<rect x="982.5" y="231.1" width="36.0" height="1.8" fill="#111"/>
<rect x="1054.7" y="231.1" width="36.0" height="1.8" fill="#111"/>
<rect x="1126.9" y="231.1" width="36.0" height="1.8" fill="#111"/>
<rect x="1199.1" y="231.1" width="36.0" height="1.8" fill="#111"/>
<rect x="1271.3" y="231.1" width="36.0" height="1.8" fill="#111"/>
<rect x="1343.5" y="231.1" width="36.0" height="1.8" fill="#111"/>
<rect x="1415.7" y="231.1" width="36.0" height="1.8" fill="#111"/>
<rect x="1487.9" y="231.1" width="36.0" height="1.8" fill="#111"/>
<rect x="1560.1" y="231.1" width="36.0" height="1.8" fill="#111"/>
<rect x="1632.3" y="231.1" width="36.0" height="1.8" fill="#111"/>
<rect x="1704.5" y="231.1" width="36.0" height="1.8" fill="#111"/>
<rect x="982.7" y="232.89999999999998" width="793.7" height="14.8" fill="#cea983"/>
<g clip-path="url(#c3)" stroke="#86705a" stroke-width="0.9" fill="none">
<path d="M984.7 246.9 L998.7 242.4 Q1074.7 237.9 1214.7 237.0"/>
<path d="M1061.2 246.9 L1075.2 242.4 Q1151.2 237.9 1291.2 236.1"/>
<path d="M1141.2 246.9 L1155.2 242.4 Q1231.2 237.9 1371.2 237.3"/>
<path d="M1215.6 246.9 L1229.6 242.4 Q1305.6 237.9 1445.6 236.9"/>
<path d="M1292.9 246.9 L1306.9 242.4 Q1382.9 237.9 1522.9 237.8"/>
<path d="M1372.2 246.9 L1386.2 242.4 Q1462.2 237.9 1602.2 236.1"/>
<path d="M1454.0 246.9 L1468.0 242.4 Q1544.0 237.9 1684.0 235.6"/>
<path d="M1530.1 246.9 L1544.1 242.4 Q1620.1 237.9 1760.1 237.5"/>
<path d="M1603.7 246.9 L1617.7 242.4 Q1693.7 237.9 1833.7 236.7"/>
<path d="M1676.1 246.9 L1690.1 242.4 Q1766.1 237.9 1906.1 237.2"/>
<path d="M1755.7 246.9 L1769.7 242.4 Q1845.7 237.9 1985.7 236.9"/>
</g>
<rect x="982.7" y="247.1" width="793.7" height="1.4" fill="#606060"/>
<rect x="982.7" y="248.5" width="793.7" height="9.00000000000001" fill="#dcdcdc"/>
<g fill="none" stroke="#aaa" stroke-width="0.7"><rect x="987.7" y="251.3" width="2.2" height="2.2"/><rect x="1009.0" y="252.7" width="2.2" height="2.2"/><rect x="1027.8" y="252.0" width="2.2" height="2.2"/><rect x="1052.2" y="254.4" width="2.2" height="2.2"/><rect x="1068.7" y="253.0" width="2.2" height="2.2"/><rect x="1076.0" y="253.2" width="2.2" height="2.2"/><rect x="1096.2" y="254.7" width="2.2" height="2.2"/><rect x="1120.3" y="251.1" width="2.2" height="2.2"/><rect x="1134.8" y="253.0" width="2.2" height="2.2"/><rect x="1141.3" y="252.0" width="2.2" height="2.2"/><rect x="1151.0" y="250.3" width="2.2" height="2.2"/><rect x="1158.3" y="253.5" width="2.2" height="2.2"/><rect x="1167.1" y="250.9" width="2.2" height="2.2"/><rect x="1181.7" y="254.1" width="2.2" height="2.2"/><rect x="1189.5" y="251.9" width="2.2" height="2.2"/><rect x="1207.6" y="254.1" width="2.2" height="2.2"/><rect x="1231.6" y="254.0" width="2.2" height="2.2"/><rect x="1243.8" y="251.8" width="2.2" height="2.2"/><rect x="1257.6" y="254.1" width="2.2" height="2.2"/><rect x="1284.7" y="250.5" width="2.2" height="2.2"/><rect x="1294.6" y="250.9" width="2.2" height="2.2"/><rect x="1305.7" y="252.1" width="2.2" height="2.2"/><rect x="1324.7" y="251.0" width="2.2" height="2.2"/><rect x="1330.8" y="251.8" width="2.2" height="2.2"/><rect x="1344.9" y="252.5" width="2.2" height="2.2"/><rect x="1371.9" y="253.2" width="2.2" height="2.2"/><rect x="1389.2" y="252.8" width="2.2" height="2.2"/><rect x="1410.1" y="250.0" width="2.2" height="2.2"/><rect x="1435.9" y="253.6" width="2.2" height="2.2"/><rect x="1461.1" y="253.7" width="2.2" height="2.2"/><rect x="1475.7" y="251.7" width="2.2" height="2.2"/><rect x="1484.0" y="252.9" width="2.2" height="2.2"/><rect x="1491.4" y="250.0" width="2.2" height="2.2"/><rect x="1502.0" y="250.5" width="2.2" height="2.2"/><rect x="1515.5" y="250.0" width="2.2" height="2.2"/><rect x="1521.5" y="250.5" width="2.2" height="2.2"/><rect x="1529.7" y="251.5" width="2.2" height="2.2"/><rect x="1536.3" y="254.1" width="2.2" height="2.2"/><rect x="1555.8" y="250.4" width="2.2" height="2.2"/><rect x="1567.3" y="251.4" width="2.2" height="2.2"/><rect x="1581.3" y="250.3" width="2.2" height="2.2"/><rect x="1606.0" y="254.7" width="2.2" height="2.2"/><rect x="1622.3" y="252.1" width="2.2" height="2.2"/><rect x="1630.2" y="250.2" width="2.2" height="2.2"/><rect x="1643.7" y="251.0" width="2.2" height="2.2"/><rect x="1667.9" y="250.5" width="2.2" height="2.2"/><rect x="1674.4" y="254.5" width="2.2" height="2.2"/><rect x="1692.1" y="250.4" width="2.2" height="2.2"/><rect x="1710.0" y="249.8" width="2.2" height="2.2"/><rect x="1727.6" y="254.6" width="2.2" height="2.2"/><rect x="1752.6" y="253.2" width="2.2" height="2.2"/><rect x="1764.4" y="251.5" width="2.2" height="2.2"/><rect x="1774.0" y="253.6" width="2.2" height="2.2"/></g>
<rect x="982.7" y="257.1" width="793.7" height="1.2" fill="#676767"/>
<rect x="982.7" y="258.3" width="793.7" height="14.399999999999988" fill="#9d7c51"/>
<rect x="982.7" y="258.3" width="793.7" height="3" fill="#b1946f"/>
<rect x="982.7" y="261.1" width="793.7" height="1" fill="#c2a888"/>
<path d="M932.4 63.5 V272.4" stroke="#666" stroke-width="1"/>
<path d="M926.3 63.5 H938.8" stroke="#555" stroke-width="1.1"/>
<path d="M926.3 69.8 H938.8" stroke="#9a9a9a" stroke-width="1.3"/>
<path d="M926.3 88.8 H938.8" stroke="#9a9a9a" stroke-width="1.3"/>
<path d="M926.3 98.5 H938.8" stroke="#555" stroke-width="1.1"/>
<path d="M926.3 104.7 H938.8" stroke="#9a9a9a" stroke-width="1.3"/>
<path d="M926.3 152.5 H938.8" stroke="#555" stroke-width="1.1"/>
<path d="M926.3 231.7 H938.8" stroke="#555" stroke-width="1.1"/>
<path d="M926.3 247.7 H938.8" stroke="#9a9a9a" stroke-width="1.3"/>
<path d="M926.3 257.4 H938.8" stroke="#555" stroke-width="1.1"/>
<path d="M926.3 272.4 H938.8" stroke="#555" stroke-width="1.1"/>
<g font-family="Liberation Sans, sans-serif">
<text x="939.2" y="86.3" font-size="17" fill="#8a8a8a" text-anchor="start">24</text>
<text x="939.2" y="134.8" font-size="17" fill="#8a8a8a" text-anchor="start">60</text>
<text x="940.5" y="198.1" font-size="17" fill="#8a8a8a" text-anchor="start">100</text>
<text x="939.0" y="245.8" font-size="16.5" fill="#8a8a8a" text-anchor="start">20</text>
<text x="940.4" y="272.0" font-size="16.5" fill="#8a8a8a" text-anchor="start">19</text>
<text x="0" y="0" font-size="16" fill="#8a8a8a" text-anchor="middle" transform="translate(924.2 168.8) rotate(-90)">263,6</text>
<text x="1354.2" y="55.8" font-size="16.6" fill="#8a8a8a" text-anchor="start">Außen</text>
<text x="1358.8" y="292.8" font-size="16.6" fill="#8a8a8a" text-anchor="start">Innen</text>
<text x="1776.5" y="293.5" font-size="16.9" fill="#b8b8b8" text-anchor="end">ubakus.de</text>
<text x="1102.2" y="329" font-size="16" fill="#8a8a8a" text-anchor="middle">100</text>
<text x="1379.5" y="329" font-size="16" fill="#8a8a8a" text-anchor="middle">600</text>
</g>
<path d="M1062 310.5 H1617.4" stroke="#555" stroke-width="1"/>
<path d="M1062 304 V316.8" stroke="#999" stroke-width="1.3"/>
<path d="M1141.5 304 V316.8" stroke="#555" stroke-width="1"/>
<path d="M1617.4 304 V316.8" stroke="#555" stroke-width="1"/>
<g font-family="Liberation Sans, sans-serif" font-size="16" text-anchor="middle" fill="#222">
<circle cx="1354.6" cy="265.2" r="12.3" fill="#fff" stroke="#2e2e2e" stroke-width="1.3"/>
<text x="1354.6" y="271.2">1</text>
<circle cx="1379.3" cy="252.7" r="12.3" fill="#fff" stroke="#2e2e2e" stroke-width="1.3"/>
<text x="1379.3" y="258.7">2</text>
<circle cx="1404.7" cy="239.8" r="12.3" fill="#fff" stroke="#2e2e2e" stroke-width="1.3"/>
<text x="1404.7" y="245.8">3</text>
<circle cx="1429.7" cy="231.8" r="12.3" fill="#fff" stroke="#2e2e2e" stroke-width="1.3"/>
<text x="1429.7" y="237.8">4</text>
<circle cx="1429.7" cy="191.7" r="12.3" fill="#fff" stroke="#2e2e2e" stroke-width="1.3"/>
<text x="1429.7" y="197.7">5</text>
<circle cx="1429.4" cy="128.7" r="12.3" fill="#fff" stroke="#2e2e2e" stroke-width="1.3"/>
<text x="1429.4" y="134.7">6</text>
<circle cx="1429.4" cy="101.4" r="12.3" fill="#fff" stroke="#2e2e2e" stroke-width="1.3"/>
<text x="1429.4" y="107.4">7</text>
<circle cx="1454.4" cy="93.7" r="12.3" fill="#fff" stroke="#2e2e2e" stroke-width="1.3"/>
<text x="1454.4" y="99.7">8</text>
<circle cx="1479.4" cy="79.3" r="12.3" fill="#fff" stroke="#2e2e2e" stroke-width="1.3"/>
<text x="1479.4" y="85.3">9</text>
<circle cx="1504.4" cy="66.5" r="12.3" fill="#fff" stroke="#2e2e2e" stroke-width="1.3"/>
<text x="1504.4" y="72.5">10</text>
</g>
</svg>
<div id="panel"><div class="in"></div></div>
<div id="pc">
<div class="w" style="left:277.6px;top:609.8px;font-size:26.3px;line-height:30px">U-Wert:</div>
<div class="w" style="left:375.3px;top:605.1px;font-size:31.3px;line-height:36px">0,319</div>
<div class="w" style="left:461.5px;top:617.8px;font-size:17.5px;line-height:20px">W/(m²K)</div>
<svg class="abs" style="left:538px;top:608px" width="32" height="32" viewBox="0 0 32 32"><defs><mask id="wm"><rect width="32" height="32" fill="#fff"/><circle cx="9.7" cy="10.4" r="2.4" fill="#000"/><path d="M9.7 10.4 L3.5 4.2" stroke="#000" stroke-width="4.8"/><circle cx="23.5" cy="24.2" r="0.75" fill="#000"/></mask></defs><g mask="url(#wm)"><circle cx="11.4" cy="12.0" r="5.3" fill="#a9a9a9"/><path d="M11.6 12.2 L24.0 24.7" stroke="#a9a9a9" stroke-width="3.9" stroke-linecap="round"/></g></svg>
<div class="abs" style="left:278.7px;top:649.6px;width:289px;height:14px;border:1px solid #3d3d3d;border-bottom-color:#888;border-right-color:#888;background:#4b4b4b"></div>
<div class="abs" style="left:279.3px;top:650.2px;width:91.7px;height:12.6px;background:#bfca28"></div>
<div class="abs" style="left:278.7px;top:664.6px;width:289px;height:3.8px;background:linear-gradient(90deg,#6e9c50 0%,#7c9c48 22%,#b59f2a 42%,#b06a28 55%,#a52a22 64%,#a02222 100%);border-bottom:1px solid #777"></div>
<div class="w" style="left:278.7px;top:676.0px;font-size:16px;line-height:18px">GEG 2020 Bestand U ≤ -1</div>
<div class="abs" style="left:474.5px;top:674.8px;width:19px;height:18.3px;background:#cdcdcd"><div style="position:absolute;left:4.5px;top:4.5px;width:0;height:0;border-left:5px solid transparent;border-right:5px solid transparent;border-top:10px solid #555"></div></div>
<div class="w" style="left:278.7px;top:710.7px;font-size:16px;line-height:18px">Beitrag zum Treibhauseffekt:</div>
<div class="abs" style="left:278.7px;top:730.5px;width:289px;height:9.2px;border:1px solid #3d3d3d;border-bottom:1.4px solid #8a8a8a;border-right-color:#8a8a8a"></div>
<div class="g" style="left:278.7px;top:754.3px;font-size:14.6px;line-height:17px">sehr gut</div>
<div class="g" style="left:568px;top:754.3px;font-size:14.6px;line-height:17px;transform:translateX(-100%)">mangelhaft</div>
<div class="w" style="left:593.7px;top:610.7px;font-size:16px;line-height:18px">Tauwasser: 0 kg/m²</div>
<div class="abs" style="left:593.7px;top:630.5px;width:289px;height:9.2px;border:1px solid #3c3c3c;border-bottom-color:#8a8a8a;border-right-color:#8a8a8a;background:rgba(0,0,0,0.05)"></div>
<div class="abs" style="left:594.2px;top:631.5px;width:3px;height:7.6px;background:#8cc85a"></div>
<div class="abs" style="left:593.7px;top:640.9px;width:289px;height:4.6px;background:linear-gradient(90deg,#6e9c50 0%,#7a9c48 45%,#b5a02a 70%,#b0702a 85%,#a62a22 96%,#a02222 100%);border-bottom:1px solid #777"></div>
<div class="w" style="left:593.7px;top:660.3px;font-size:16px;line-height:18px">Holzfeuchte: +0,0 %</div>
<div class="abs" style="left:593.7px;top:680.4px;width:289px;height:9.2px;border:1px solid #3c3c3c;border-bottom-color:#8a8a8a;border-right-color:#8a8a8a;background:rgba(0,0,0,0.05)"></div>
<div class="abs" style="left:594.2px;top:681.4px;width:3px;height:7.6px;background:#8cc85a"></div>
<div class="abs" style="left:593.7px;top:690.8px;width:289px;height:4.6px;background:linear-gradient(90deg,#6e9c50 0%,#7a9c48 18%,#b5a02a 30%,#b0702a 40%,#a62a22 50%,#a02222 100%);border-bottom:1px solid #777"></div>
<div class="w" style="left:593.7px;top:710.3px;font-size:16px;line-height:18px">Trocknungsdauer: -</div>
<div class="abs" style="left:593.7px;top:730.5px;width:289px;height:9.2px;border:1px solid #3c3c3c;border-bottom-color:#8a8a8a;border-right-color:#8a8a8a;background:rgba(0,0,0,0.05)"></div>
<div class="abs" style="left:594.2px;top:731.5px;width:3px;height:7.6px;background:#8cc85a"></div>
<div class="abs" style="left:593.7px;top:740.9px;width:289px;height:4.6px;background:linear-gradient(90deg,#6e9c50 0%,#7a9c48 40%,#b5a02a 60%,#b0702a 78%,#a62a22 92%,#a02222 100%);border-bottom:1px solid #777"></div>
<div class="g" style="left:593.7px;top:754.3px;font-size:14.6px;line-height:17px">sehr gut</div>
<div class="g" style="left:883px;top:754.3px;font-size:14.6px;line-height:17px;transform:translateX(-100%)">mangelhaft</div>
<div class="w" style="left:908.3px;top:611.1px;font-size:16px;line-height:18px">sd-Wert: 157 m</div>
<div class="w" style="left:1197.6px;top:611.1px;font-size:16px;line-height:18px;transform:translateX(-100%)">Dicke: 26,365 cm</div>
<div class="w" style="left:1197.6px;top:633.2px;font-size:16px;line-height:18px;transform:translateX(-100%)">Gewicht: 64 kg/m²</div>
<div class="w" style="left:908.3px;top:657.9px;font-size:16px;line-height:18px">Oberfläche innen: 18,7°C (54%)</div>
<div class="abs" style="left:908.8px;top:678.4px;width:289px;height:9.2px;border:1px solid #3c3c3c;border-bottom-color:#8a8a8a;border-right-color:#8a8a8a;background:rgba(0,0,0,0.05)"></div>
<div class="abs" style="left:909.3px;top:679.4px;width:132px;height:7.6px;background:#8cc85a"></div>
<div class="abs" style="left:908.8px;top:688.8px;width:289px;height:4.6px;background:linear-gradient(90deg,#a02222 0%,#a62a22 14%,#b5842a 22%,#b5a02a 30%,#7a9c48 38%,#6e9c50 100%);border-bottom:1px solid #777"></div>
<div class="w" style="left:908.3px;top:708.2px;font-size:16px;line-height:18px">Trocknungsreserve: 192 g/m²a</div>
<div class="abs" style="left:908.8px;top:728.3px;width:289px;height:9.2px;border:1px solid #3c3c3c;border-bottom-color:#8a8a8a;border-right-color:#8a8a8a;background:rgba(0,0,0,0.05)"></div>
<div class="abs" style="left:909.3px;top:729.3px;width:276px;height:7.6px;background:#8cc85a"></div>
<div class="abs" style="left:908.8px;top:738.6999999999999px;width:289px;height:4.6px;background:linear-gradient(90deg,#a02222 0%,#a62a22 45%,#b5842a 50%,#b5a02a 54%,#7a9c48 58%,#6e9c50 100%);border-bottom:1px solid #777"></div>
<div class="g" style="left:908.3px;top:751.3px;font-size:14.6px;line-height:17px">mangelhaft</div>
<div class="g" style="left:1197.8px;top:751.3px;font-size:14.6px;line-height:17px;transform:translateX(-100%)">sehr gut</div>
<div class="w" style="left:1223.5px;top:610.7px;font-size:16px;line-height:18px">Temp.Ampl.Dämpfung (1/TAV): 7,7</div>
<div class="abs" style="left:1223.5px;top:630.5px;width:289px;height:9.2px;border:1px solid #3c3c3c;border-bottom-color:#8a8a8a;border-right-color:#8a8a8a;background:rgba(0,0,0,0.05)"></div>
<div class="abs" style="left:1224.0px;top:631.5px;width:111.7px;height:7.6px;background:#a8c83c"></div>
<div class="abs" style="left:1223.5px;top:640.9px;width:289px;height:4.6px;background:linear-gradient(90deg,#a02222 0%,#b5842a 12%,#b5a02a 20%,#7a9c48 32%,#6e9c50 100%);border-bottom:1px solid #777"></div>
<div class="w" style="left:1223.5px;top:660.6px;font-size:16px;line-height:18px">Phasenverschiebung: 7,0 h</div>
<div class="abs" style="left:1223.5px;top:680.8px;width:289px;height:9.2px;border:1px solid #3c3c3c;border-bottom-color:#8a8a8a;border-right-color:#8a8a8a;background:rgba(0,0,0,0.05)"></div>
<div class="abs" style="left:1224.0px;top:681.8px;width:112.6px;height:7.6px;background:#a8c83c"></div>
<div class="abs" style="left:1223.5px;top:691.1999999999999px;width:289px;height:4.6px;background:linear-gradient(90deg,#a02222 0%,#b5842a 12%,#b5a02a 20%,#7a9c48 32%,#6e9c50 100%);border-bottom:1px solid #777"></div>
<div class="w" style="left:1223.5px;top:710.6px;font-size:16px;line-height:18px">Speicherfähigkeit innen: 39 kJ/m²K</div>
<div class="abs" style="left:1223.5px;top:730.8px;width:289px;height:9.2px;border:1px solid #3c3c3c;border-bottom-color:#8a8a8a;border-right-color:#8a8a8a;background:rgba(0,0,0,0.05)"></div>
<div class="abs" style="left:1224.0px;top:731.8px;width:112.6px;height:7.6px;background:#a8c83c"></div>
<div class="abs" style="left:1223.5px;top:741.1999999999999px;width:289px;height:4.6px;background:linear-gradient(90deg,#a02222 0%,#b5842a 12%,#b5a02a 20%,#7a9c48 32%,#6e9c50 100%);border-bottom:1px solid #777"></div>
<div class="g" style="left:1223.5px;top:754.3px;font-size:14.6px;line-height:17px">mangelhaft</div>
<div class="g" style="left:1512.7px;top:754.3px;font-size:14.6px;line-height:17px;transform:translateX(-100%)">sehr gut</div>
<div class="abs" style="left:4px;top:613px;width:0;height:0;border-left:7.7px solid transparent;border-right:7.7px solid transparent;border-top:12.5px solid #eee"></div>
</div>
</body></html>
